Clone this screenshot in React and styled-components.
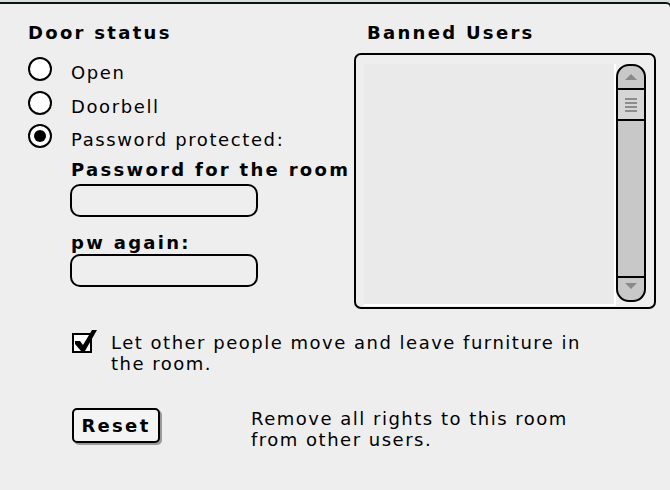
import React from "react";
import styled, { createGlobalStyle } from "styled-components";

const GlobalStyle = createGlobalStyle`
  html, body {
    margin: 0;
    padding: 0;
    background: #d4e0e0;
    overflow: hidden;
  }
  body {
    font-family: "DejaVu Sans", "Liberation Sans", sans-serif;
    color: #000;
  }
`;

const App = () => {
    return (
        <>
            <GlobalStyle />
            <Panel>
                <TopRow>
                    <LeftCol>
                        <Heading>Door status</Heading>
                        <RadioList>
                            <RadioRow>
                                <Radio />
                                <Label>Open</Label>
                            </RadioRow>
                            <RadioRow>
                                <Radio />
                                <Label>Doorbell</Label>
                            </RadioRow>
                            <RadioRow>
                                <Radio $checked />
                                <Label>Password protected:</Label>
                            </RadioRow>
                        </RadioList>
                        <PasswordBlock>
                            <Heading>Password for the room</Heading>
                            <TextInput type="password" />
                            <Heading $gap>pw again:</Heading>
                            <TextInput type="password" $tight />
                        </PasswordBlock>
                    </LeftCol>
                    <RightCol>
                        <Heading $indent>Banned Users</Heading>
                        <ListBox>
                            <ListArea />
                            <Scrollbar>
                                <ScrollCap $up>
                                    <Arrow $up />
                                </ScrollCap>
                                <Thumb>
                                    <Grip />
                                </Thumb>
                                <Track />
                                <ScrollCap>
                                    <Arrow />
                                </ScrollCap>
                            </Scrollbar>
                        </ListBox>
                    </RightCol>
                </TopRow>
                <CheckRow>
                    <CheckBox>
                        <svg width="26" height="26" viewBox="0 0 26 26">
                            <polygon points="3,11 8,11 11,15 20,0 25,0 13,21 9,21 3,14" fill="#000" />
                        </svg>
                    </CheckBox>
                    <Text>Let other people move and leave furniture in the room.</Text>
                </CheckRow>
                <ResetRow>
                    <Button>Reset</Button>
                    <Text $narrow>Remove all rights to this room from other users.</Text>
                </ResetRow>
            </Panel>
        </>
    )
}

export default App;

const Panel = styled.div`
    box-sizing: border-box;
    margin-top: 2px;
    width: 672px;
    height: 488px;
    background: #eeeeee;
    border-top: 2px solid #111;
    border-right: 2px solid #111;
    border-top-right-radius: 6px;
    padding: 19px 0 0 28px;
`;
const TopRow = styled.div`
    display: flex;
`;
const LeftCol = styled.div`
    width: 326px;
    display: flex;
    flex-direction: column;
`;
const RightCol = styled.div`
    width: 302px;
    display: flex;
    flex-direction: column;
`;
const Heading = styled.div`
    font-weight: bold;
    font-size: 18px;
    line-height: 20px;
    letter-spacing: 2.3px;
    white-space: nowrap;
    padding-left: ${p => (p.$indent ? "13px" : "0")};
    margin-top: ${p => (p.$gap ? "16px" : "0")};
`;
const RadioList = styled.div`
    margin-top: 14px;
    display: flex;
    flex-direction: column;
`;
const RadioRow = styled.div`
    display: flex;
    align-items: flex-start;
    height: 33.5px;
`;
const Radio = styled.span`
    box-sizing: border-box;
    width: 24px;
    height: 24px;
    border: 2px solid #000;
    border-radius: 50%;
    background: #fff;
    position: relative;
    flex-shrink: 0;
    &::after {
        content: "";
        display: ${p => (p.$checked ? "block" : "none")};
        position: absolute;
        left: 4px;
        top: 4px;
        width: 12px;
        height: 12px;
        border-radius: 50%;
        background: #000;
    }
`;
const Label = styled.span`
    margin-left: 19px;
    margin-top: 6px;
    font-size: 18px;
    line-height: 20px;
    letter-spacing: 1.6px;
    white-space: nowrap;
`;
const PasswordBlock = styled.div`
    margin-left: 43px;
    margin-top: 2px;
    display: flex;
    flex-direction: column;
`;
const TextInput = styled.input`
    box-sizing: border-box;
    display: block;
    width: 188px;
    height: 33px;
    margin: ${p => (p.$tight ? "1px" : "4px")} 0 0 -1px;
    border: 2px solid #000;
    border-radius: 10px;
    background: #eeeeee;
    outline: none;
    padding: 0 8px;
    font-family: inherit;
    font-size: 16px;
`;
const ListBox = styled.div`
    box-sizing: border-box;
    margin-top: 10px;
    width: 302px;
    height: 256px;
    border: 2px solid #000;
    border-radius: 7px;
    padding: 9px 8px 1px 8px;
    display: flex;
    align-items: flex-start;
`;
const ListArea = styled.div`
    flex: 1;
    align-self: stretch;
    background: #eaeaea;
    border-right: 2px solid #fff;
    border-bottom: 2px solid #fff;
`;
const Scrollbar = styled.div`
    width: 30px;
    height: 238px;
    display: flex;
    flex-direction: column;
`;
const ScrollCap = styled.div`
    box-sizing: border-box;
    height: 26px;
    border: 2px solid #000;
    border-radius: ${p => (p.$up ? "13px 13px 0 0" : "0 0 13px 13px")};
    background: #c8c8c8;
    display: flex;
    justify-content: center;
    align-items: ${p => (p.$up ? "center" : "flex-start")};
    padding-top: ${p => (p.$up ? "0" : "5px")};
`;
const Arrow = styled.span`
    width: 0;
    height: 0;
    border-left: 6px solid transparent;
    border-right: 6px solid transparent;
    border-bottom: ${p => (p.$up ? "6px solid #8a8a8a" : "0")};
    border-top: ${p => (p.$up ? "0" : "6px solid #8a8a8a")};
`;
const Thumb = styled.div`
    box-sizing: border-box;
    height: 31px;
    border: 2px solid #000;
    border-top: 0;
    background: #d6d6d6;
    display: flex;
    justify-content: center;
    align-items: center;
`;
const Grip = styled.span`
    width: 12px;
    height: 14px;
    background: repeating-linear-gradient(to bottom, #8c8c8c 0 2px, transparent 2px 4px);
`;
const Track = styled.div`
    flex: 1;
    border-left: 2px solid #000;
    border-right: 2px solid #000;
    background: #c8c8c8;
`;
const CheckRow = styled.div`
    display: flex;
    align-items: flex-start;
    margin: 23px 0 0 44px;
`;
const CheckBox = styled.span`
    box-sizing: border-box;
    position: relative;
    width: 20px;
    height: 20px;
    margin-top: 1px;
    border: 2px solid #000;
    background: #fff;
    flex-shrink: 0;
    svg {
        position: absolute;
        left: -2px;
        top: -5px;
    }
`;
const Text = styled.div`
    margin-left: ${p => (p.$narrow ? "91px" : "19px")};
    width: ${p => (p.$narrow ? "345px" : "500px")};
    font-size: 18px;
    line-height: 21px;
    letter-spacing: 1.5px;
`;
const ResetRow = styled.div`
    display: flex;
    align-items: flex-start;
    margin: 34px 0 0 44px;
`;
const Button = styled.button`
    box-sizing: border-box;
    width: 88px;
    height: 35px;
    border: 2px solid #000;
    border-radius: 5px;
    background: #f4f4f4;
    box-shadow: 2px 2px 0 #9a9a9a;
    font-family: inherit;
    font-weight: bold;
    font-size: 18px;
    letter-spacing: 2.3px;
    color: #000;
    padding: 0;
`;
